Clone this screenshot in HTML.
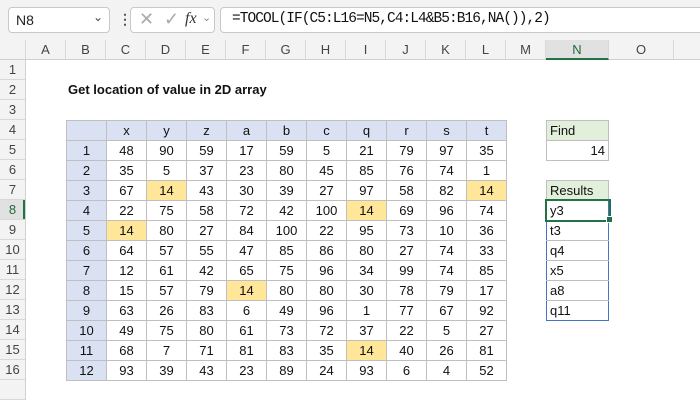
<!DOCTYPE html>
<html><head><style>
body{margin:0;width:700px;height:400px;background:#fff;font-family:"Liberation Sans",Arial,sans-serif;overflow:hidden;position:relative}
.abs{position:absolute}
.fb{top:0;left:0;width:700px;height:40px;background:#f3f3f3;border-bottom:1px solid #d4d4d4}
.box{background:#fff;border:1px solid #c8c8c8;border-radius:4px;height:24px;top:7px}
.ch{top:40px;height:19px;background:#f3f3f3;border-bottom:1px solid #d0d0d0;font-size:13px;color:#444;text-align:center;line-height:19px}
.ch div{position:absolute;top:0;height:19px;border-right:1px solid #d8d8d8}
.rh{left:0;width:25px;background:#f3f3f3;border-right:1px solid #d0d0d0;font-size:13px;color:#444}
.rh div{height:19px;border-bottom:1px solid #d8d8d8;text-align:center;line-height:20px}
table{border-collapse:collapse;table-layout:fixed;position:absolute}
td{border:1px solid #bfbfbf;height:19px;padding:0;font-size:13px;text-align:center;color:#111;line-height:19px}
.b{background:#d9e1f2}.h{background:#ffe699}
.n td{text-align:left;padding-left:3px}
</style></head><body>
<div class="abs fb"></div>
<div class="abs box" style="left:8px;width:100px"><span class="abs" style="left:7px;top:4px;font-size:14px;color:#222">N8</span><span class="abs" style="left:84px;top:2px;font-size:12px;color:#444">⌄</span></div>
<div class="abs" style="left:118px;top:11px;font-size:14px;color:#555;font-weight:bold">⋮</div>
<div class="abs box" style="left:130px;width:83px;color:#aaa"><span class="abs" style="left:8px;top:1px;font-size:18px">✕</span><span class="abs" style="left:33px;top:1px;font-size:18px">✓</span><span class="abs" style="left:54px;top:2px;font-size:16px;font-style:italic;font-family:'Liberation Serif',serif;color:#333">fx</span><span class="abs" style="left:71px;top:3px;font-size:11px;color:#888">⌄</span></div>
<div class="abs box" style="left:220px;width:490px"><span class="abs" style="left:11px;top:3px;font-size:14.5px;font-family:'Liberation Mono',monospace;color:#111;letter-spacing:-0.95px">=TOCOL(IF(C5:L16=N5,C4:L4&amp;B5:B16,NA()),2)</span></div>

<div class="abs ch" style="left:0;width:700px">
<div style="left:0;width:25px"></div>
<div style="left:26px;width:39px">A</div><div style="left:66px;width:39px">B</div><div style="left:106px;width:39px">C</div><div style="left:146px;width:39px">D</div><div style="left:186px;width:39px">E</div><div style="left:226px;width:39px">F</div><div style="left:266px;width:39px">G</div><div style="left:306px;width:39px">H</div><div style="left:346px;width:39px">I</div><div style="left:386px;width:39px">J</div><div style="left:426px;width:39px">K</div><div style="left:466px;width:39px">L</div><div style="left:506px;width:39px">M</div><div style="left:546px;width:62px;background:#e1e1e1;color:#1e6b3a;border-bottom:2px solid #217346;height:18px">N</div><div style="left:609px;width:64px">O</div>
</div>
<div class="abs rh" style="top:60px;height:340px">
<div>1</div><div>2</div><div>3</div><div>4</div><div>5</div><div>6</div><div>7</div><div style="background:#e1e1e1;color:#1e6b3a;box-shadow:inset -2px 0 #217346">8</div><div>9</div><div>10</div><div>11</div><div>12</div><div>13</div><div>14</div><div>15</div><div>16</div><div></div>
</div>
<div class="abs" style="left:68px;top:82px;font-size:13px;font-weight:bold;color:#111">Get location of value in 2D array</div>

<table style="left:66px;top:119.5px;width:441px">
<colgroup><col style="width:40px"><col style="width:40px"><col style="width:40px"><col style="width:40px"><col style="width:40px"><col style="width:40px"><col style="width:40px"><col style="width:40px"><col style="width:40px"><col style="width:40px"><col style="width:40px"></colgroup>
<tr class="b"><td></td><td>x</td><td>y</td><td>z</td><td>a</td><td>b</td><td>c</td><td>q</td><td>r</td><td>s</td><td>t</td></tr>
<tr><td class="b">1</td><td>48</td><td>90</td><td>59</td><td>17</td><td>59</td><td>5</td><td>21</td><td>79</td><td>97</td><td>35</td></tr>
<tr><td class="b">2</td><td>35</td><td>5</td><td>37</td><td>23</td><td>80</td><td>45</td><td>85</td><td>76</td><td>74</td><td>1</td></tr>
<tr><td class="b">3</td><td>67</td><td class="h">14</td><td>43</td><td>30</td><td>39</td><td>27</td><td>97</td><td>58</td><td>82</td><td class="h">14</td></tr>
<tr><td class="b">4</td><td>22</td><td>75</td><td>58</td><td>72</td><td>42</td><td>100</td><td class="h">14</td><td>69</td><td>96</td><td>74</td></tr>
<tr><td class="b">5</td><td class="h">14</td><td>80</td><td>27</td><td>84</td><td>100</td><td>22</td><td>95</td><td>73</td><td>10</td><td>36</td></tr>
<tr><td class="b">6</td><td>64</td><td>57</td><td>55</td><td>47</td><td>85</td><td>86</td><td>80</td><td>27</td><td>74</td><td>33</td></tr>
<tr><td class="b">7</td><td>12</td><td>61</td><td>42</td><td>65</td><td>75</td><td>96</td><td>34</td><td>99</td><td>74</td><td>85</td></tr>
<tr><td class="b">8</td><td>15</td><td>57</td><td>79</td><td class="h">14</td><td>80</td><td>80</td><td>30</td><td>78</td><td>79</td><td>17</td></tr>
<tr><td class="b">9</td><td>63</td><td>26</td><td>83</td><td>6</td><td>49</td><td>96</td><td>1</td><td>77</td><td>67</td><td>92</td></tr>
<tr><td class="b">10</td><td>49</td><td>75</td><td>80</td><td>61</td><td>73</td><td>72</td><td>37</td><td>22</td><td>5</td><td>27</td></tr>
<tr><td class="b">11</td><td>68</td><td>7</td><td>71</td><td>81</td><td>83</td><td>35</td><td class="h">14</td><td>40</td><td>26</td><td>81</td></tr>
<tr><td class="b">12</td><td>93</td><td>39</td><td>43</td><td>23</td><td>89</td><td>24</td><td>93</td><td>6</td><td>4</td><td>52</td></tr>
</table>

<table class="n" style="left:546px;top:119.5px;width:63px">
<tr><td style="background:#e2efda">Find</td></tr>
<tr><td style="text-align:right;padding-right:3px">14</td></tr>
</table>
<table class="n" style="left:546px;top:179.5px;width:63px">
<tr><td style="background:#e2efda">Results</td></tr>
<tr><td style="border-color:#4472c4">y3</td></tr>
<tr><td style="border-left-color:#4472c4;border-right-color:#4472c4">t3</td></tr>
<tr><td style="border-left-color:#4472c4;border-right-color:#4472c4">q4</td></tr>
<tr><td style="border-left-color:#4472c4;border-right-color:#4472c4">x5</td></tr>
<tr><td style="border-left-color:#4472c4;border-right-color:#4472c4">a8</td></tr>
<tr><td style="border-color:#4472c4">q11</td></tr>
</table>
<div class="abs" style="left:545px;top:199px;width:62px;height:19px;border:2px solid #217346"></div>
<div class="abs" style="left:606px;top:216px;width:5px;height:5px;background:#217346;border:1px solid #fff"></div>
</body></html>
